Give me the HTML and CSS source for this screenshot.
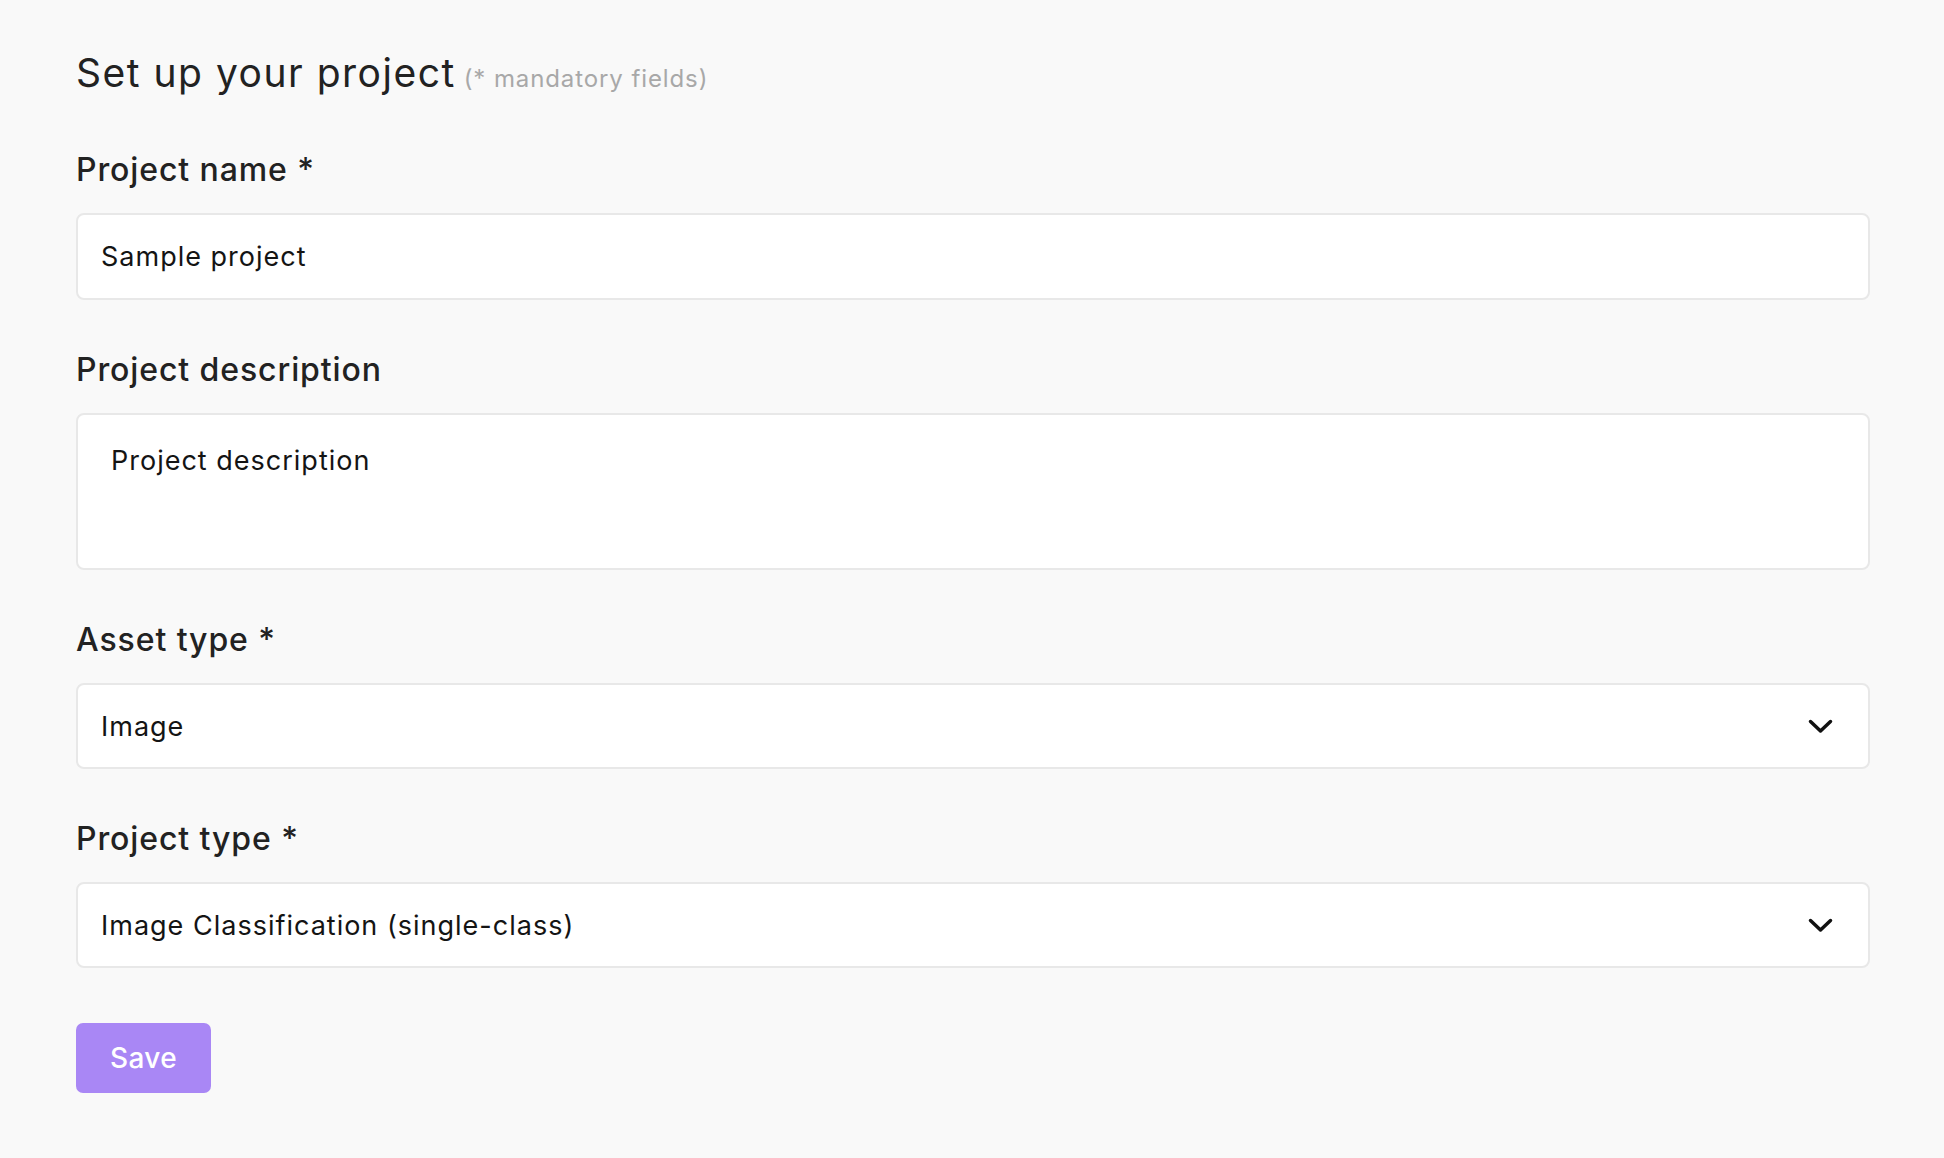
FILE: index.html
```html
<!DOCTYPE html>
<html lang="en">
<head>
<meta charset="utf-8">
<title>Set up your project</title>
<link rel="stylesheet" href="styles.css">
</head>
<body>
<main class="page">
  <h1 class="title">Set up your project<span class="hint">(* mandatory fields)</span></h1>

  <div class="field first">
    <label class="label" for="name">Project name *</label>
    <input class="box input" id="name" type="text" value="Sample project">
  </div>

  <div class="field">
    <label class="label" for="desc">Project description</label>
    <textarea class="box textarea" id="desc">Project description</textarea>
  </div>

  <div class="field">
    <label class="label" for="asset">Asset type *</label>
    <div class="select-wrap">
      <select class="box select" id="asset"><option>Image</option></select>
      <svg class="chevron" width="25" height="15" viewBox="0 0 25 15" aria-hidden="true"><path d="M2.5 2.5 L12.5 12 L22.5 2.5" fill="none" stroke="#111" stroke-width="3.5" stroke-linecap="round" stroke-linejoin="round"/></svg>
    </div>
  </div>

  <div class="field">
    <label class="label" for="ptype">Project type *</label>
    <div class="select-wrap">
      <select class="box select" id="ptype"><option>Image Classification (single-class)</option></select>
      <svg class="chevron" width="25" height="15" viewBox="0 0 25 15" aria-hidden="true"><path d="M2.5 2.5 L12.5 12 L22.5 2.5" fill="none" stroke="#111" stroke-width="3.5" stroke-linecap="round" stroke-linejoin="round"/></svg>
    </div>
  </div>

  <div class="actions">
    <button class="save" type="button">Save</button>
  </div>
</main>
</body>
</html>
```
FILE: styles.css
```css
* { box-sizing: border-box; }

html, body {
  margin: 0;
  background: #f9f9f9;
}

body {
  font-family: "Inter", "Liberation Sans", sans-serif;
  color: #222;
}

.page {
  padding: 50px 74px 40px 76px;
}

.title {
  margin: 0;
  font-size: 39px;
  line-height: 46px;
  height: 46px;
  font-weight: 400;
  letter-spacing: 1.5px;
  color: #222;
}

.hint {
  margin-left: 8px;
  font-size: 24px;
  line-height: 1;
  font-weight: 400;
  letter-spacing: 0.9px;
  color: #a8a8a8;
}

.field {
  display: flex;
  flex-direction: column;
  margin-top: 52px;
}

.field.first {
  margin-top: 56px;
}

.label {
  font-size: 32px;
  line-height: 36px;
  font-weight: 500;
  letter-spacing: 0.9px;
  color: #222;
  margin-bottom: 25px;
}

.box {
  width: 100%;
  display: block;
  margin: 0;
  background: #fff;
  border: 2px solid #e8e8e8;
  border-radius: 8px;
  font-family: "Inter", "Liberation Sans", sans-serif;
  font-size: 27px;
  letter-spacing: 1px;
  color: #141414;
  outline: none;
}

.input {
  height: 87px;
  padding: 0 23px;
}

.textarea {
  height: 157px;
  padding: 30px 33px;
  line-height: 32px;
  resize: none;
}

.select-wrap {
  position: relative;
}

.select {
  height: 86px;
  padding: 0 80px 0 23px;
  appearance: none;
  -webkit-appearance: none;
}

.chevron {
  position: absolute;
  right: 37px;
  top: 36px;
  pointer-events: none;
}

.actions {
  margin-top: 55px;
}

.save {
  width: 135px;
  height: 70px;
  border: none;
  border-radius: 7px;
  background: #a987f5;
  color: #fff;
  font-family: "Inter", "Liberation Sans", sans-serif;
  font-size: 28px;
  font-weight: 500;
  letter-spacing: 0.4px;
  padding: 0;
}
```
